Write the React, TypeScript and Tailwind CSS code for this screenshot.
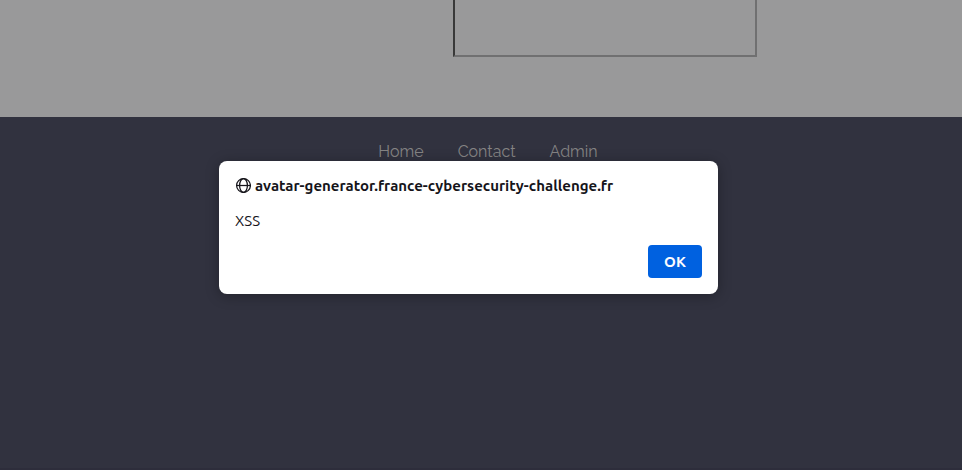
import React from "react";

const links = ["Home", "Contact", "Admin"];

function GlobeIcon() {
  return (
    <svg
      aria-hidden="true"
      viewBox="0 0 16 16"
      className="h-4 w-4 shrink-0"
      fill="none"
      stroke="#15141a"
      strokeWidth="1.25"
    >
      <circle cx="8.5" cy="8.5" r="6.9" />
      <ellipse cx="8.5" cy="8.5" rx="3.9" ry="6.9" />
      <path d="M1.6 8.5h13.8" />
    </svg>
  );
}

function AlertDialog() {
  return (
    <div
      role="alertdialog"
      aria-labelledby="alert-title"
      aria-describedby="alert-message"
      className="absolute left-[219px] top-[161px] w-[499px] rounded-lg bg-white p-4 font-['Ubuntu','Noto_Sans',sans-serif] text-[15px] text-[#15141a] shadow-[0_2px_14px_rgba(0,0,0,0.3)]"
    >
      <div className="flex h-[18px] items-start gap-1">
        <GlobeIcon />
        <h1 id="alert-title" className="whitespace-nowrap font-bold leading-[18px]">
          avatar-generator.france-cybersecurity-challenge.fr
        </h1>
      </div>
      <p id="alert-message" className="mt-[14px] leading-6">
        XSS
      </p>
      <div className="mt-3 flex justify-end">
        <button
          type="button"
          className="h-[33px] w-[54px] rounded bg-[#0061e0] pt-0.5 font-bold text-[#fbfbfe]"
        >
          OK
        </button>
      </div>
    </div>
  );
}

export default function App() {
  return (
    <div className="relative flex min-h-screen flex-col bg-[#99999a]">
      <main className="pb-[60px] pl-[453px]">
        <div className="h-[57px] w-[304px] border-2 border-t-0 border-[#707071] border-l-[#393939]" />
      </main>
      <footer className="flex-1 border-b-2 border-[#2d2d3b] bg-[#31323f] pl-[14px] pt-[23px]">
        <nav className="flex justify-center gap-[34px] font-['Raleway','Lato',sans-serif] text-base font-normal text-[#858484]">
          {links.map((label) => (
            <a key={label} href="#" className="whitespace-nowrap">
              {label}
            </a>
          ))}
        </nav>
      </footer>
      <AlertDialog />
    </div>
  );
}
